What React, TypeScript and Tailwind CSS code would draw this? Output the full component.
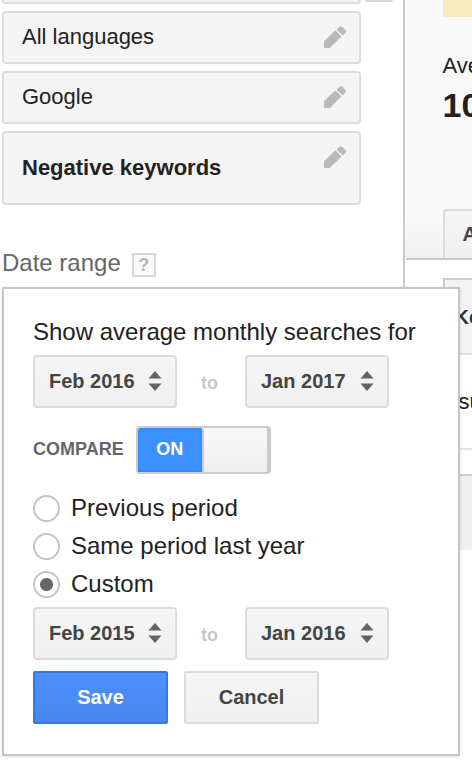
import { useState } from "react";

function PencilIcon() {
  return (
    <svg width="22" height="22" viewBox="0 0 22 22" fill="#b9b9b9" aria-hidden="true">
      <path d="M0 15.8 Q0 15.3 0.4 14.9 L10.6 5 Q11.4 4.3 12.2 5 L16.9 9.7 Q17.5 10.4 16.8 11.1 L6.4 21.5 Q5.9 22 5.2 22 H0.8 Q0 22 0 21.2 Z" />
      <path d="M13.2 3 L15.2 1 Q16.8 -0.5 18.4 1 L21.2 3.8 Q22.7 5.4 21.2 7 L19.4 8.8 Q18.7 9.4 18 8.7 L13.3 4.2 Q12.7 3.6 13.2 3 Z" />
    </svg>
  );
}

function SortArrows() {
  return (
    <svg
      width="14"
      height="20"
      viewBox="0 0 14 20"
      fill="#636363"
      aria-hidden="true"
      className="pointer-events-none absolute top-[16px] right-[15px]">
      <path d="M7 0 L13.5 7.6 H0.5 Z" />
      <path d="M0.5 12.6 H13.5 L7 20 Z" />
    </svg>
  );
}

function TargetingRow({ label, large }: { label: string; large?: boolean }) {
  return (
    <div className="flex items-start justify-between rounded-[4px] border-2 border-[#dcdcdc] bg-[#f4f4f4] pl-[18px] pr-[13px]">
      <span
        className={
          large
            ? "pt-[21px] pb-[21px] text-[22px] leading-[28px] font-bold"
            : "pt-[10px] pb-[11px] text-[22px] leading-[28px]"
        }>
        {label}
      </span>
      <button type="button" aria-label={`Edit ${label}`} className="mt-[13px]">
        <PencilIcon />
      </button>
    </div>
  );
}

function MonthSelect({ label, value }: { label: string; value: string }) {
  return (
    <div className="relative w-[144px]">
      <select
        aria-label={label}
        defaultValue={value}
        className="block h-[53px] w-full appearance-none rounded-[4px] border-2 border-[#dcdcdc] bg-linear-to-b from-[#f5f5f5] to-[#f0f0f0] pb-[2px] pl-[14px] text-[20px] font-bold text-[#444]">
        <option value={value}>{value}</option>
      </select>
      <SortArrows />
    </div>
  );
}

function MonthRange({ name, from, to }: { name: string; from: string; to: string }) {
  return (
    <div className="flex items-center">
      <MonthSelect label={`${name} start`} value={from} />
      <span className="w-[68px] pt-[3px] pr-[3px] text-center text-[18px] leading-[24px] font-bold text-[#c8c8c8]">
        to
      </span>
      <MonthSelect label={`${name} end`} value={to} />
    </div>
  );
}

const periods = ["Previous period", "Same period last year", "Custom"];

function DateRangeMenu() {
  const [compare, setCompare] = useState(true);
  const [period, setPeriod] = useState("Custom");

  return (
    <div className="absolute top-full left-[2px] z-10 w-[458px] border-2 border-[#c6c6c6] bg-white px-[29px] pt-[27px] pb-[30px] shadow-[0_1px_3px_rgba(0,0,0,0.12)]">
      <h3 className="mb-[7px] text-[24px] leading-[32px] whitespace-nowrap">
        Show average monthly searches for
      </h3>
      <MonthRange name="Period" from="Feb 2016" to="Jan 2017" />

      <div className="mt-[18px] flex items-center gap-[12px]">
        <span id="compare" className="pb-[2px] text-[18px] leading-[24px] font-bold text-[#666]">
          COMPARE
        </span>
        <button
          type="button"
          role="switch"
          aria-checked={compare}
          aria-labelledby="compare"
          onClick={() => setCompare(!compare)}
          className="flex h-[48px] w-[135px] rounded-[4px] border-2 border-r-4 border-[#cbcbcb] bg-linear-to-b from-[#f9f9f9] to-[#efefef]">
          <span className="flex h-full w-[66px] items-center justify-center rounded-t-[3px] border-r-2 border-[#cbcbcb] bg-[#3b91fd] pb-[2px] text-[18px] font-bold text-white shadow-[inset_0_0_2px_#1f6fd8]">
            ON
          </span>
        </button>
      </div>

      <div className="mt-[15px] mb-[4px]">
        {periods.map((name) => (
          <label key={name} className="flex h-[38px] items-center gap-[11px] text-[24px] leading-[32px]">
            <input
              type="radio"
              name="period"
              checked={period === name}
              onChange={() => setPeriod(name)}
              className="m-0 size-[27px] appearance-none rounded-full border-2 border-[#c4c4c4] bg-white checked:bg-[radial-gradient(circle,#666_6px,#fff_7px)]"
            />
            {name}
          </label>
        ))}
      </div>
      <MonthRange name="Comparison" from="Feb 2015" to="Jan 2016" />

      <div className="mt-[11px] flex gap-4">
        <button
          type="button"
          className="h-[53px] w-[135px] rounded-[2px] border-2 border-[#3079ed] bg-linear-to-b from-[#4d90fe] to-[#4787ed] pb-[2px] text-[20px] font-bold text-white">
          Save
        </button>
        <button
          type="button"
          className="h-[53px] w-[135px] rounded-[2px] border-2 border-[#dcdcdc] bg-linear-to-b from-[#f5f5f5] to-[#f0f0f0] pb-[2px] text-[20px] font-bold text-[#444]">
          Cancel
        </button>
      </div>
    </div>
  );
}

function Sidebar() {
  return (
    <aside className="relative min-w-0 border-r-2 border-[#cacaca] pl-[2px]">
      <div className="flex items-start gap-1 pr-[10px]">
        <div className="h-[4px] flex-1 rounded-b-[4px] border-2 border-t-0 border-[#dcdcdc] bg-[#f4f4f4]" />
        <div className="h-[2px] w-[28px] rounded-b-[2px] bg-[#d8d8d8]" />
      </div>
      <div className="mt-[7px] flex flex-col gap-[7px] pr-[42px]">
        <TargetingRow label="All languages" />
        <TargetingRow label="Google" />
        <TargetingRow label="Negative keywords" large />
      </div>
      <div className="flex items-center gap-[11px] pt-[42px] pb-[8px]">
        <h2 className="text-[24px] leading-[32px] text-[#666]">Date range</h2>
        <button
          type="button"
          aria-label="Help"
          className="mt-[4px] flex size-[24px] items-center justify-center border-2 border-[#d6d6d6] bg-[#f9f9f9] text-[18px] font-bold text-[#b4b4b4]">
          ?
        </button>
      </div>
      <DateRangeMenu />
    </aside>
  );
}

function Results() {
  return (
    <main className="min-w-0 overflow-hidden whitespace-nowrap">
      <section className="bg-linear-to-b from-[#f9f9f9] from-85% to-[#f1f1f1] pl-[38px]">
        <div className="h-[17px] bg-[#f9edbe]" />
        <p className="pt-[35px] text-[22px] leading-[28px]">Ave</p>
        <p className="pt-[5px] text-[34px] leading-[40px] font-bold">10</p>
        <div className="pt-[84px]">
          <button
            type="button"
            className="block h-[49px] w-[160px] rounded-t-[4px] border-2 border-b-0 border-[#dcdcdc] bg-linear-to-b from-[#f5f5f5] to-[#f0f0f0] pb-[2px] pl-[18px] text-left text-[20px] font-bold text-[#444]">
            A
          </button>
        </div>
      </section>
      <div className="ml-[1px] h-[2px] bg-[#c8c8c8]" />
      <div className="pt-[18px] pl-[38px]">
        <table className="w-[160px] border-separate border-spacing-0 text-left">
          <thead>
            <tr>
              <th className="h-[77px] border-t-2 border-b-2 border-l-2 border-[#ccc] border-b-[#ddd] bg-[#f4f4f4] pl-[10px] text-[20px] font-bold text-[#333]">
                Ke
              </th>
            </tr>
          </thead>
          <tbody>
            <tr>
              <td className="h-[95px] border-b-2 border-[#e6e6e6] pl-[16px] text-[22px]">su</td>
            </tr>
          </tbody>
        </table>
        <div className="mt-[24px] h-[76px] border-t-2 border-[#ccc] bg-[#efefef]" />
      </div>
    </main>
  );
}

export default function App() {
  return (
    <div className="grid min-h-screen grid-cols-[minmax(0,6fr)_minmax(0,1fr)] items-start overflow-hidden bg-white font-['Liberation_Sans',Arial,sans-serif] text-[#222]">
      <Sidebar />
      <Results />
    </div>
  );
}
